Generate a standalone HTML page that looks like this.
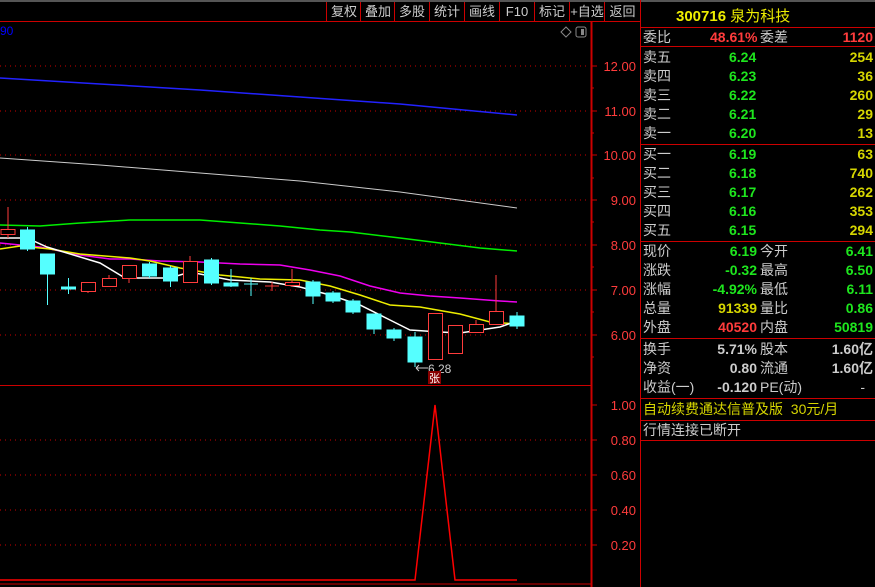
<!DOCTYPE html>
<html><head><meta charset="utf-8"><style>
body{margin:0;background:#000;width:875px;height:587px;overflow:hidden;position:relative;font-family:"Liberation Sans","Noto Sans CJK SC",sans-serif}
.a{position:absolute;white-space:nowrap}
.btn{position:absolute;top:2px;height:19px;border-left:1px solid #c00;color:#ccc;font-size:13px;line-height:19px;text-align:center;width:34px}
.r{position:absolute;left:640px;width:235px;height:19px;font-size:14px;line-height:19px}
.r span{position:absolute}
.w{color:#ccc}.g{color:#1ee61e}.y{color:#d6d600}.rd{color:#ff3c3c}
</style></head><body>
<div class="a" style="left:0;top:0;width:875px;height:2px;background:#555"></div>
<div class="btn" style="left:326px">复权</div><div class="btn" style="left:360px">叠加</div><div class="btn" style="left:394px">多股</div><div class="btn" style="left:429px">统计</div><div class="btn" style="left:464px">画线</div><div class="btn" style="left:499px">F10</div><div class="btn" style="left:534px">标记</div><div class="btn" style="left:569px">+自选</div><div class="btn" style="left:604px;width:35px">返回</div>
<svg class="a" style="left:0;top:0" width="875" height="587">
<line x1="0" y1="21.5" x2="640" y2="21.5" stroke="#c00"/>
<line x1="591.5" y1="21" x2="591.5" y2="587" stroke="#c00" stroke-width="2"/>
<line x1="640.5" y1="0" x2="640.5" y2="587" stroke="#c00"/>
<line x1="0" y1="385.5" x2="592" y2="385.5" stroke="#c00"/>
<line x1="0" y1="584" x2="592" y2="584" stroke="#c00"/>
<text x="0" y="35" fill="#00f" font-size="12" font-family="Liberation Sans">90</text>
<path d="M561 32 l5 -5 5 5 -5 5z" fill="none" stroke="#888"/>
<rect x="576" y="27" width="10" height="10" rx="2" fill="none" stroke="#888"/><rect x="581" y="29" width="3" height="6" fill="#888"/>
<g stroke="#c00" stroke-dasharray="1,4">
<line x1="0" y1="66" x2="590" y2="66"/><line x1="0" y1="111" x2="590" y2="111"/><line x1="0" y1="155" x2="590" y2="155"/><line x1="0" y1="200" x2="590" y2="200"/><line x1="0" y1="245" x2="590" y2="245"/><line x1="0" y1="290" x2="590" y2="290"/><line x1="0" y1="335" x2="590" y2="335"/>
<line x1="0" y1="440" x2="590" y2="440"/><line x1="0" y1="475" x2="590" y2="475"/><line x1="0" y1="510" x2="590" y2="510"/><line x1="0" y1="545" x2="590" y2="545"/>
</g>
<g stroke="#c00"><line x1="591" y1="66" x2="597" y2="66"/><line x1="591" y1="88" x2="594" y2="88"/><line x1="591" y1="111" x2="597" y2="111"/><line x1="591" y1="133" x2="594" y2="133"/><line x1="591" y1="155" x2="597" y2="155"/><line x1="591" y1="178" x2="594" y2="178"/><line x1="591" y1="200" x2="597" y2="200"/><line x1="591" y1="222" x2="594" y2="222"/><line x1="591" y1="245" x2="597" y2="245"/><line x1="591" y1="267" x2="594" y2="267"/><line x1="591" y1="290" x2="597" y2="290"/><line x1="591" y1="312" x2="594" y2="312"/><line x1="591" y1="335" x2="597" y2="335"/><line x1="591" y1="357" x2="594" y2="357"/>
<line x1="591" y1="405" x2="597" y2="405"/><line x1="591" y1="440" x2="597" y2="440"/><line x1="591" y1="475" x2="597" y2="475"/><line x1="591" y1="510" x2="597" y2="510"/><line x1="591" y1="545" x2="597" y2="545"/></g>
<g fill="#ff3c3c" font-size="13" font-family="Liberation Sans" text-anchor="end">
<text x="636" y="71">12.00</text><text x="636" y="116">11.00</text><text x="636" y="160">10.00</text><text x="636" y="205">9.00</text><text x="636" y="250">8.00</text><text x="636" y="295">7.00</text><text x="636" y="340">6.00</text>
<text x="636" y="410">1.00</text><text x="636" y="445">0.80</text><text x="636" y="480">0.60</text><text x="636" y="515">0.40</text><text x="636" y="550">0.20</text></g>
<polyline fill="none" stroke="#22f" stroke-width="1.5" points="0,78 100,84 200,90 300,97 400,104 517,115"/>
<polyline fill="none" stroke="#ccc" points="0,158 100,165 200,173 300,181 400,192 517,208"/>
<polyline fill="none" stroke="#0e0" stroke-width="1.5" points="0,225 40,226 80,223 130,220 200,220 240,223 280,226 320,230 350,232 400,238 440,243 480,248 517,251"/>
<polyline fill="none" stroke="#e0e" stroke-width="1.5" points="0,243 40,247 80,255 110,259 130,259 160,261 200,262 240,264 280,265 310,270 340,276 370,286 400,293 430,296 460,298 500,301 517,302"/>
<polyline fill="none" stroke="#ee0" stroke-width="1.5" points="0,249 20,246 50,249 80,254 130,258 150,261 180,268 220,275 260,279 300,280 330,286 360,295 390,305 420,307 460,314 490,322 517,324"/>
<polyline fill="none" stroke="#fff" stroke-width="1.5" points="0,238 27,238 47,247 100,263 125,278 170,278 190,272 230,280 270,282 300,287 330,295 360,305 390,320 410,330 440,332 460,333 480,330 500,327 517,321"/>
<g stroke="#ff3c3c" fill="#000">
<line x1="8" y1="207" x2="8" y2="238"/><rect x="1" y="229.5" width="14" height="5"/>
<line x1="88" y1="282" x2="88" y2="293"/><rect x="81.5" y="282.5" width="14" height="9"/>
<line x1="109" y1="275" x2="109" y2="286"/><rect x="102.5" y="278.5" width="14" height="8"/>
<line x1="129" y1="265" x2="129" y2="283"/><rect x="122.5" y="265.5" width="14" height="13"/>
<line x1="190" y1="256" x2="190" y2="282"/><rect x="183.5" y="261.5" width="14" height="21"/>
<line x1="272" y1="282" x2="272" y2="291"/><line x1="265" y1="286" x2="279" y2="286"/>
<line x1="292" y1="269" x2="292" y2="287"/><rect x="285.5" y="282.5" width="14" height="3"/>
<rect x="428.5" y="313.5" width="14" height="46"/>
<rect x="448.5" y="325.5" width="14" height="28"/>
<line x1="476" y1="320" x2="476" y2="324"/><rect x="469.5" y="324.5" width="14" height="8"/>
<line x1="496" y1="275" x2="496" y2="311"/><rect x="489.5" y="311.5" width="14" height="13"/>
</g>
<g stroke="#55ffff" fill="#55ffff">
<line x1="27.5" y1="227" x2="27.5" y2="251"/><rect x="20.5" y="230" width="14" height="19"/>
<line x1="47.5" y1="254" x2="47.5" y2="305"/><rect x="40.5" y="254" width="14" height="20"/>
<line x1="68.5" y1="278" x2="68.5" y2="294"/><rect x="61.5" y="287" width="14" height="2"/>
<line x1="149.5" y1="262" x2="149.5" y2="278"/><rect x="142.5" y="264" width="14" height="12"/>
<line x1="170.5" y1="266" x2="170.5" y2="287"/><rect x="163.5" y="268" width="14" height="13"/>
<line x1="211.5" y1="258" x2="211.5" y2="285"/><rect x="204.5" y="260" width="14" height="23"/>
<line x1="231" y1="269" x2="231" y2="287"/><rect x="224" y="283" width="14" height="3"/>
<line x1="251" y1="278" x2="251" y2="296"/><line x1="244" y1="284" x2="258" y2="284"/>
<line x1="313" y1="280" x2="313" y2="304"/><rect x="306" y="282" width="14" height="14"/>
<line x1="333" y1="291" x2="333" y2="303"/><rect x="326" y="293" width="14" height="8"/>
<line x1="353" y1="299" x2="353" y2="314"/><rect x="346" y="301" width="14" height="11"/>
<line x1="374" y1="314" x2="374" y2="334"/><rect x="367" y="314" width="14" height="15"/>
<line x1="394" y1="328" x2="394" y2="341"/><rect x="387" y="330" width="14" height="8"/>
<line x1="415" y1="332" x2="415" y2="367"/><rect x="408" y="337" width="14" height="25"/>
<line x1="517" y1="312" x2="517" y2="329"/><rect x="510" y="316" width="14" height="10"/>
</g>
<path d="M416 368 h12 M416 368 l3 -3 M416 368 l3 3" stroke="#ccc" fill="none"/>
<text x="428" y="373" fill="#ccc" font-size="12" font-family="Liberation Sans">6.28</text>
<rect x="428" y="371" width="13" height="13" fill="#800"/>
<text x="429" y="382" fill="#fff" font-size="11">张</text>
<polyline fill="none" stroke="#f00" stroke-width="1.5" points="0,580 415,580 435,405 455,580 517,580"/>
<line x1="640" y1="27.5" x2="875" y2="27.5" stroke="#c00"/>
<line x1="640" y1="46.5" x2="875" y2="46.5" stroke="#c00"/>
<line x1="640" y1="144.5" x2="875" y2="144.5" stroke="#c00"/>
<line x1="640" y1="241.5" x2="875" y2="241.5" stroke="#c00"/>
<line x1="640" y1="338.5" x2="875" y2="338.5" stroke="#c00"/>
<line x1="640" y1="398.5" x2="875" y2="398.5" stroke="#c00"/>
<line x1="640" y1="420.5" x2="875" y2="420.5" stroke="#c00"/>
<line x1="640" y1="440.5" x2="875" y2="440.5" stroke="#c00"/>
</svg>
<div class="a" style="left:676px;top:5px;font-size:15px;color:#ee0;font-weight:bold">300716 <span style="font-weight:normal">泉为科技</span></div>
<div class="r" style="top:28px"><span class="w" style="left:3px">委比</span><span class="rd" style="left:70px;font-weight:bold">48.61%</span><span class="w" style="left:120px">委差</span><span class="rd" style="right:2px;font-weight:bold">1120</span></div>
<div class="r" style="top:48px"><span class="w" style="left:3px">卖五</span><span class="g" style="left:89px;font-weight:bold">6.24</span><span class="y" style="right:2px;font-weight:bold">254</span></div>
<div class="r" style="top:67px"><span class="w" style="left:3px">卖四</span><span class="g" style="left:89px;font-weight:bold">6.23</span><span class="y" style="right:2px;font-weight:bold">36</span></div>
<div class="r" style="top:86px"><span class="w" style="left:3px">卖三</span><span class="g" style="left:89px;font-weight:bold">6.22</span><span class="y" style="right:2px;font-weight:bold">260</span></div>
<div class="r" style="top:105px"><span class="w" style="left:3px">卖二</span><span class="g" style="left:89px;font-weight:bold">6.21</span><span class="y" style="right:2px;font-weight:bold">29</span></div>
<div class="r" style="top:124px"><span class="w" style="left:3px">卖一</span><span class="g" style="left:89px;font-weight:bold">6.20</span><span class="y" style="right:2px;font-weight:bold">13</span></div>
<div class="r" style="top:145px"><span class="w" style="left:3px">买一</span><span class="g" style="left:89px;font-weight:bold">6.19</span><span class="y" style="right:2px;font-weight:bold">63</span></div>
<div class="r" style="top:164px"><span class="w" style="left:3px">买二</span><span class="g" style="left:89px;font-weight:bold">6.18</span><span class="y" style="right:2px;font-weight:bold">740</span></div>
<div class="r" style="top:183px"><span class="w" style="left:3px">买三</span><span class="g" style="left:89px;font-weight:bold">6.17</span><span class="y" style="right:2px;font-weight:bold">262</span></div>
<div class="r" style="top:202px"><span class="w" style="left:3px">买四</span><span class="g" style="left:89px;font-weight:bold">6.16</span><span class="y" style="right:2px;font-weight:bold">353</span></div>
<div class="r" style="top:221px"><span class="w" style="left:3px">买五</span><span class="g" style="left:89px;font-weight:bold">6.15</span><span class="y" style="right:2px;font-weight:bold">294</span></div>
<div class="r" style="top:242px"><span class="w" style="left:3px">现价</span><span class="g" style="right:118px;font-weight:bold">6.19</span><span class="w" style="left:120px">今开</span><span class="g" style="right:2px;font-weight:bold">6.41</span></div>
<div class="r" style="top:261px"><span class="w" style="left:3px">涨跌</span><span class="g" style="right:118px;font-weight:bold">-0.32</span><span class="w" style="left:120px">最高</span><span class="g" style="right:2px;font-weight:bold">6.50</span></div>
<div class="r" style="top:280px"><span class="w" style="left:3px">涨幅</span><span class="g" style="right:118px;font-weight:bold">-4.92%</span><span class="w" style="left:120px">最低</span><span class="g" style="right:2px;font-weight:bold">6.11</span></div>
<div class="r" style="top:299px"><span class="w" style="left:3px">总量</span><span class="y" style="right:118px;font-weight:bold">91339</span><span class="w" style="left:120px">量比</span><span class="g" style="right:2px;font-weight:bold">0.86</span></div>
<div class="r" style="top:318px"><span class="w" style="left:3px">外盘</span><span class="rd" style="right:118px;font-weight:bold">40520</span><span class="w" style="left:120px">内盘</span><span class="g" style="right:2px;font-weight:bold">50819</span></div>
<div class="r" style="top:340px"><span class="w" style="left:3px">换手</span><span class="w" style="right:118px;font-weight:bold">5.71%</span><span class="w" style="left:120px">股本</span><span class="w" style="right:2px;font-weight:bold">1.60亿</span></div>
<div class="r" style="top:359px"><span class="w" style="left:3px">净资</span><span class="w" style="right:118px;font-weight:bold">0.80</span><span class="w" style="left:120px">流通</span><span class="w" style="right:2px;font-weight:bold">1.60亿</span></div>
<div class="r" style="top:378px"><span class="w" style="left:3px">收益(一)</span><span class="w" style="right:118px;font-weight:bold">-0.120</span><span class="w" style="left:120px">PE(动)</span><span class="w" style="right:10px">-</span></div>
<div class="r" style="top:400px"><span class="y" style="left:3px">自动续费通达信普及版&nbsp; 30元/月</span></div>
<div class="r" style="top:421px"><span class="w" style="left:3px">行情连接已断开</span></div>
</body></html>
